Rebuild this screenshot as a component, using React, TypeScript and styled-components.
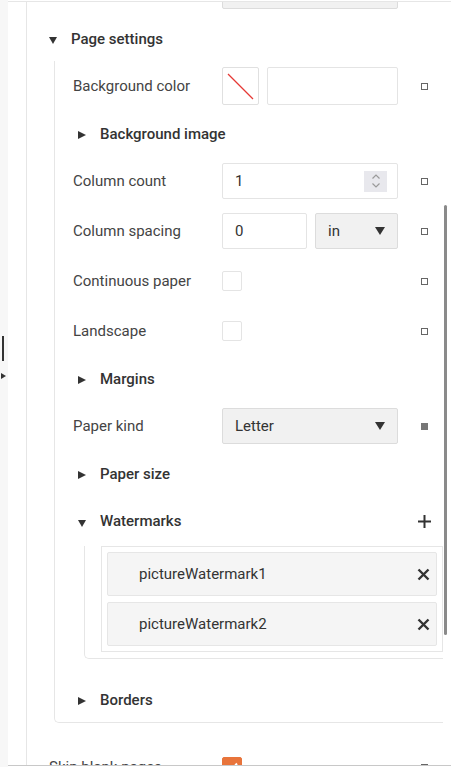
import React from "react";
import styled, { createGlobalStyle } from "styled-components";

const Global = createGlobalStyle`
  html, body { margin: 0; padding: 0; background: #fff; }
  body {
    font-family: Roboto, "Liberation Sans", Arial, sans-serif;
    color: #333;
    overflow: hidden;
  }
  * { box-sizing: border-box; }
`;

const Shell = styled.div`
  display: flex;
  width: 451px;
  height: 767px;
  overflow: hidden;
`;

const Splitter = styled.div`
  width: 8px;
  flex: none;
  background: #f7f7f7;
  display: flex;
  flex-direction: column;
  align-items: flex-start;
`;

const Handle = styled.div`
  margin: 336px 0 0 2px;
  width: 2px;
  height: 25px;
  background: #333;
`;

const SplitArrow = styled.div`
  margin: 12px 0 0 1px;
  width: 0;
  height: 0;
  border-left: 5px solid #333;
  border-top: 3px solid transparent;
  border-bottom: 3px solid transparent;
`;

const Panel = styled.div`
  flex: 1;
  min-width: 0;
  display: flex;
  flex-direction: column;
  padding-top: 1px;
`;

const Viewport = styled.div`
  position: relative;
  height: 765px;
  overflow: hidden;
  border-top: 1px solid #e6e6e6;
  border-bottom: 1px solid #c8c8c8;
`;

const Content = styled.div`
  margin: -36px 0 0 18px;
  padding-right: 8px;
  border-left: 1px solid #e6e6e6;
  display: flex;
  flex-direction: column;
`;

const ScrollThumb = styled.div`
  position: absolute;
  left: 436px;
  top: 203px;
  width: 3px;
  height: 430px;
  border-radius: 1.5px;
  background: #8a8a8a;
`;

type Level = "top" | "group";

const Row = styled.div<{ $level: Level }>`
  display: flex;
  align-items: center;
  height: 50px;
  flex: none;
  padding-left: ${(p) => (p.$level === "top" ? 22 : 18)}px;
`;

const Label = styled.div<{ $level: Level }>`
  width: ${(p) => (p.$level === "top" ? 173 : 149)}px;
  flex: none;
  font-size: 15px;
  color: #444;
  white-space: nowrap;
`;

const Editor = styled.div`
  width: 176px;
  flex: none;
  display: flex;
  gap: 8px;
`;

const Marker = styled.div<{ $filled?: boolean }>`
  margin-left: 23px;
  width: 7px;
  height: 7px;
  flex: none;
  border: 1px solid ${(p) => (p.$filled ? "#777" : "#666")};
  background: ${(p) => (p.$filled ? "#777" : "transparent")};
`;

const Field = styled.div<{ $width?: number; $grey?: boolean }>`
  height: 36px;
  width: ${(p) => (p.$width ? `${p.$width}px` : "100%")};
  flex: ${(p) => (p.$width ? "none" : "1")};
  display: flex;
  align-items: center;
  padding: 0 10px 0 12px;
  border: 1px solid ${(p) => (p.$grey ? "#dcdcdc" : "#e4e4e4")};
  border-radius: 2px;
  background: ${(p) => (p.$grey ? "#f1f1f1" : "#fff")};
  font-size: 15px;
  color: #333;
`;

const FieldText = styled.span`
  flex: 1;
`;

const Swatch = styled.div`
  width: 37px;
  height: 38px;
  flex: none;
  border: 1px solid #e0e0e0;
  border-radius: 2px;
  display: flex;
  align-items: center;
  justify-content: center;
`;

const TextBox = styled.div`
  flex: 1;
  height: 38px;
  border: 1px solid #e4e4e4;
  border-radius: 2px;
`;

const Spinner = styled.div`
  width: 23px;
  height: 21px;
  background: #e8e8ed;
  display: flex;
  align-items: center;
  justify-content: center;
`;

const DropArrow = styled.div`
  width: 0;
  height: 0;
  margin-right: 2px;
  border-top: 8px solid #333;
  border-left: 5px solid transparent;
  border-right: 5px solid transparent;
`;

const Check = styled.div<{ $checked?: boolean }>`
  width: 20px;
  height: 20px;
  border: 1px solid ${(p) => (p.$checked ? "#e8743b" : "#e4e4e4")};
  background: ${(p) => (p.$checked ? "#e8743b" : "#fff")};
  border-radius: 2px;
  display: flex;
  align-items: center;
  justify-content: center;
`;

const Header = styled.div<{ $level: Level; $tall?: boolean }>`
  display: flex;
  align-items: center;
  height: ${(p) => (p.$tall ? 50 : 45)}px;
  flex: none;
  padding-left: ${(p) => (p.$level === "top" ? 22 : 23)}px;
  padding-right: 12px;
  gap: 14px;
  font-size: 15px;
  font-weight: 500;
  color: #333;
`;

const Caret = styled.div<{ $open?: boolean }>`
  width: 0;
  height: 0;
  flex: none;
  ${(p) =>
    p.$open
      ? `border-top: 7px solid #333; border-left: 4.5px solid transparent; border-right: 4.5px solid transparent; margin-top: 4px;`
      : `border-left: 8px solid #333; border-top: 4.5px solid transparent; border-bottom: 4.5px solid transparent; margin-top: 3px;`}
`;

const HeaderAction = styled.div`
  margin-left: auto;
  display: flex;
  align-items: center;
`;

const GroupBody = styled.div`
  margin-left: 27px;
  border-left: 1px solid #e6e6e6;
  border-bottom: 1px solid #e6e6e6;
  border-bottom-left-radius: 5px;
  display: flex;
  flex-direction: column;
  margin-bottom: 19px;
`;

const Collection = styled.div`
  margin: 0 0 18px 29px;
  padding: 0 0 6px 16px;
  border-left: 1px solid #e6e6e6;
  border-bottom: 1px solid #e6e6e6;
  border-bottom-left-radius: 5px;
`;

const ItemList = styled.div`
  border: 1px solid #e6e6e6;
  padding: 5px;
  display: flex;
  flex-direction: column;
  gap: 6px;
`;

const Item = styled.div`
  height: 44px;
  display: flex;
  align-items: center;
  padding: 0 6px 0 31px;
  background: #f5f5f5;
  border: 1px solid #e6e6e6;
  border-radius: 2px;
  font-size: 15px;
  color: #333;
`;

const ItemName = styled.span`
  flex: 1;
`;

const IconBtn = styled.div`
  width: 13px;
  height: 13px;
  display: flex;
  align-items: center;
  justify-content: center;
`;

const Cross = () => (
  <IconBtn>
    <svg width="13" height="13" viewBox="0 0 13 13">
      <path d="M1.5 1.5 L11.5 11.5 M11.5 1.5 L1.5 11.5" stroke="#333" strokeWidth="2.4" />
    </svg>
  </IconBtn>
);

const Plus = () => (
  <IconBtn>
    <svg width="13" height="13" viewBox="0 0 13 13">
      <path d="M6.5 0 V13 M0 6.5 H13" stroke="#333" strokeWidth="2" />
    </svg>
  </IconBtn>
);

const Chevrons = () => (
  <svg width="10" height="16" viewBox="0 0 10 16">
    <path d="M1.5 5.5 L5 2 L8.5 5.5" stroke="#9a9a9a" strokeWidth="1.2" fill="none" />
    <path d="M1.5 10.5 L5 14 L8.5 10.5" stroke="#9a9a9a" strokeWidth="1.2" fill="none" />
  </svg>
);

const Tick = () => (
  <svg width="14" height="14" viewBox="0 0 14 14">
    <path d="M2 7.5 L5.5 11 L12 3.5" stroke="#fff" strokeWidth="2" fill="none" />
  </svg>
);

const SubHeader: React.FC<{ title: string; open?: boolean; tall?: boolean; action?: React.ReactNode }> = ({
  title,
  open,
  tall,
  action,
}) => (
  <Header $level="group" $tall={tall}>
    <Caret $open={open} />
    <span>{title}</span>
    {action && <HeaderAction>{action}</HeaderAction>}
  </Header>
);

const Prop: React.FC<{ label: string; level?: Level; filled?: boolean; children?: React.ReactNode }> = ({
  label,
  level = "group",
  filled,
  children,
}) => (
  <Row $level={level}>
    <Label $level={level}>{label}</Label>
    <Editor>{children}</Editor>
    <Marker $filled={filled} />
  </Row>
);

export default function App() {
  return (
    <>
      <Global />
      <Shell>
        <Splitter>
          <Handle />
          <SplitArrow />
        </Splitter>
        <Panel>
          <Viewport>
            <Content>
              <Row $level="top">
                <Label $level="top"></Label>
                <Editor>
                  <Field $grey />
                </Editor>
              </Row>

              <Header $level="top">
                <Caret $open />
                <span>Page settings</span>
              </Header>
              <GroupBody>
                <Prop label="Background color">
                  <Swatch>
                    <svg width="29" height="29" viewBox="0 0 29 29">
                      <line x1="2" y1="2" x2="27" y2="27" stroke="#e53935" strokeWidth="1.3" />
                    </svg>
                  </Swatch>
                  <TextBox />
                </Prop>
                <SubHeader title="Background image" />
                <Prop label="Column count">
                  <Field>
                    <FieldText>1</FieldText>
                    <Spinner>
                      <Chevrons />
                    </Spinner>
                  </Field>
                </Prop>
                <Prop label="Column spacing">
                  <Field $width={85}>
                    <FieldText>0</FieldText>
                  </Field>
                  <Field $grey>
                    <FieldText>in</FieldText>
                    <DropArrow />
                  </Field>
                </Prop>
                <Prop label="Continuous paper">
                  <Check />
                </Prop>
                <Prop label="Landscape">
                  <Check />
                </Prop>
                <SubHeader title="Margins" />
                <Prop label="Paper kind" filled>
                  <Field $grey>
                    <FieldText>Letter</FieldText>
                    <DropArrow />
                  </Field>
                </Prop>
                <SubHeader title="Paper size" />
                <SubHeader title="Watermarks" open tall action={<Plus />} />
                <Collection>
                  <ItemList>
                    <Item>
                      <ItemName>pictureWatermark1</ItemName>
                      <Cross />
                    </Item>
                    <Item>
                      <ItemName>pictureWatermark2</ItemName>
                      <Cross />
                    </Item>
                  </ItemList>
                </Collection>
                <SubHeader title="Borders" />
              </GroupBody>

              <Prop label="Skip blank pages" level="top">
                <Check $checked>
                  <Tick />
                </Check>
              </Prop>
            </Content>
            <ScrollThumb />
          </Viewport>
        </Panel>
      </Shell>
    </>
  );
}
